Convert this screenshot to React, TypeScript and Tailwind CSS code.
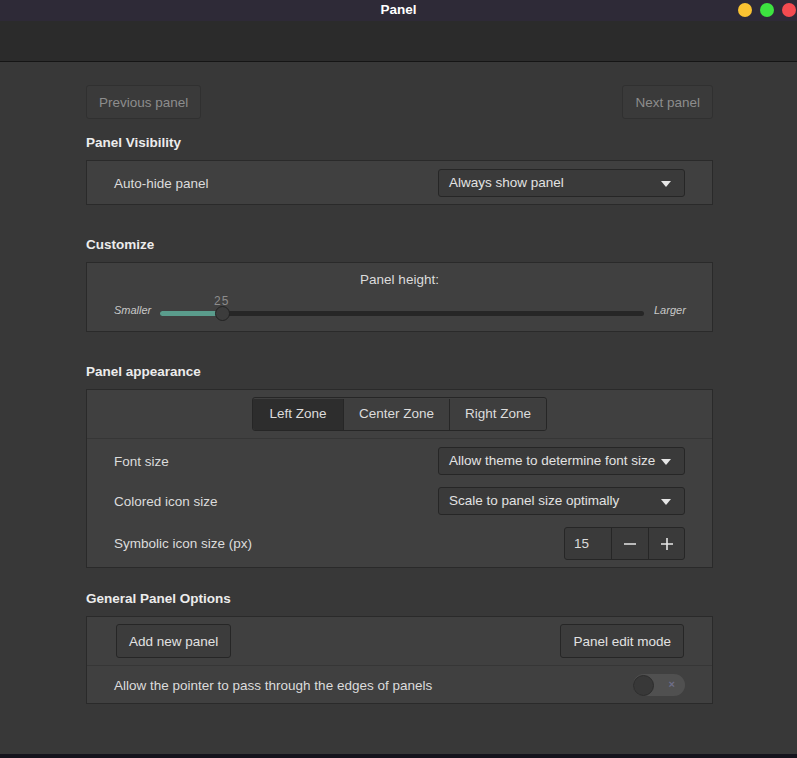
import React from 'react';

const font = { fontFamily: '"Liberation Sans", "Noto Sans", sans-serif' };

function Caret() {
  return (
    <svg width="10" height="6" viewBox="0 0 10 6" aria-hidden="true">
      <path d="M0 0h10L5 6z" fill="#e6e6e6" />
    </svg>
  );
}

function Dropdown({ label }: { label: string }) {
  return (
    <div className="flex h-[28px] w-[247px] items-center justify-between rounded-[3px] border border-[#262626] bg-[#3a3a3a] pl-[10px] pr-[13px] pt-[1px] text-[13.5px] text-[#e2e2e2]">
      <span>{label}</span>
      <Caret />
    </div>
  );
}

function Heading({ children, className }: { children: React.ReactNode; className: string }) {
  return <h2 className={`h-[18px] pt-[2px] text-[13.5px] font-bold leading-[16px] text-[#ececec] ${className}`}>{children}</h2>;
}

function Box({ children }: { children: React.ReactNode }) {
  return <div className="mt-[9px] border border-[#2a2a2a] bg-[#404040]">{children}</div>;
}

function Row({ label, children, className }: { label: string; children: React.ReactNode; className: string }) {
  return (
    <div className={`flex items-center justify-between pl-[27px] pr-[27px] ${className}`}>
      <span className="pt-[2px] text-[13.5px] text-[#dcdcdc]">{label}</span>
      {children}
    </div>
  );
}

export default function App() {
  return (
    <div className="flex h-[758px] w-[797px] flex-col overflow-hidden bg-[#383838]" style={font}>
      {/* title bar */}
      <div className="relative flex h-[21px] shrink-0 items-center justify-center bg-[#2e2a37]">
        <span className="text-[13.5px] font-bold text-white">Panel</span>
        <div className="absolute right-[1px] top-[3px] flex gap-[8px]">
          <span className="h-[14px] w-[14px] rounded-full bg-[#fbc332]" />
          <span className="h-[14px] w-[14px] rounded-full bg-[#3de340]" />
          <span className="h-[14px] w-[14px] rounded-full bg-[#f44b50]" />
        </div>
      </div>
      <div className="h-[41px] shrink-0 border-b border-[#151515] bg-[#2b2b2b]" />

      <div className="flex-1 pl-[86px] pr-[84px] pt-[23px]">
        <div className="flex justify-between">
          <button className="h-[34px] rounded-[3px] border border-[#303030] bg-[#3a3a3a] px-[12px] pt-[2px] text-[13.5px] text-[#8d8d8d]">
            Previous panel
          </button>
          <button className="h-[34px] rounded-[3px] border border-[#303030] bg-[#3a3a3a] px-[12px] pt-[2px] text-[13.5px] text-[#8d8d8d]">
            Next panel
          </button>
        </div>

        <Heading className="mt-[14px]">Panel Visibility</Heading>
        <Box>
          <Row label="Auto-hide panel" className="pb-[7px] pt-[8px]">
            <Dropdown label="Always show panel" />
          </Row>
        </Box>

        <Heading className="mt-[30px]">Customize</Heading>
        <Box>
          <div className="flex h-[68px] flex-col">
            <div className="pt-[8px] text-center text-[13.5px] leading-[18px] text-[#dcdcdc]">Panel height:</div>
            <div className="mt-[13px] flex items-center pl-[27px] pr-[26px]">
              <span className="mb-[7px] w-[46px] text-[11px] italic text-[#c8c8c8]">Smaller</span>
              <div className="relative h-[5px] flex-1 rounded-full bg-[#262626]">
                <div className="h-full w-[63px] rounded-full bg-[#5a9c8c]" />
                <div className="absolute left-[55px] top-[-5px] h-[15px] w-[15px] rounded-full border border-[#222] bg-[#3c3c3c]" />
                <span className="absolute left-[54px] top-[-17px] text-[12px] leading-[14px] tracking-[1px] text-[#8c8c8c]">25</span>
              </div>
              <span className="mb-[7px] w-[42px] pl-[10px] text-[11px] italic text-[#c8c8c8]">Larger</span>
            </div>
          </div>
        </Box>

        <Heading className="mt-[30px]">Panel appearance</Heading>
        <Box>
          <div className="flex justify-center border-b border-[#363636] pb-[7px] pt-[7px]">
            <div className="flex h-[34px] overflow-hidden rounded-[3px] border border-[#262626] pt-[1px] text-[13.5px] text-[#dcdcdc]">
              <span className="flex w-[90px] items-center justify-center bg-[#2d2d2d]">Left Zone</span>
              <span className="flex w-[106px] items-center justify-center border-l border-[#262626] bg-[#3e3e3e]">Center Zone</span>
              <span className="flex w-[97px] items-center justify-center border-l border-[#262626] bg-[#3e3e3e]">Right Zone</span>
            </div>
          </div>
          <Row label="Font size" className="pt-[8px]">
            <Dropdown label="Allow theme to determine font size" />
          </Row>
          <Row label="Colored icon size" className="pt-[12px]">
            <Dropdown label="Scale to panel size optimally" />
          </Row>
          <Row label="Symbolic icon size (px)" className="pb-[7px] pt-[12px]">
            <div className="flex h-[33px] w-[121px] overflow-hidden rounded-[3px] border border-[#262626] bg-[#3a3a3a] text-[13.5px] text-[#dcdcdc]">
              <span className="flex w-[46px] items-center pl-[9px] pt-[1px]">15</span>
              <span className="flex w-[37px] items-center justify-center border-l border-[#262626]">
                <svg width="14" height="14" viewBox="0 0 14 14"><path d="M1 7h12" stroke="#e6e6e6" strokeWidth="1.6" /></svg>
              </span>
              <span className="flex flex-1 items-center justify-center border-l border-[#262626]">
                <svg width="14" height="14" viewBox="0 0 14 14"><path d="M1 7h12M7 1v12" stroke="#e6e6e6" strokeWidth="1.6" /></svg>
              </span>
            </div>
          </Row>
        </Box>

        <Heading className="mt-[21px]">General Panel Options</Heading>
        <Box>
          <div className="flex justify-between border-b border-[#363636] pb-[7px] pl-[29px] pr-[28px] pt-[7px]">
            <button className="h-[34px] rounded-[3px] border border-[#262626] bg-[#3c3c3c] px-[12px] pt-[2px] text-[13.5px] text-[#e2e2e2]">
              Add new panel
            </button>
            <button className="h-[34px] rounded-[3px] border border-[#262626] bg-[#3c3c3c] px-[12px] pt-[2px] text-[13.5px] text-[#e2e2e2]">
              Panel edit mode
            </button>
          </div>
          <Row label="Allow the pointer to pass through the edges of panels" className="pb-[7px] pt-[8px]">
            <div className="relative flex h-[22px] w-[52px] items-center rounded-full bg-[#505050]">
              <span className="h-[21px] w-[21px] rounded-full border border-[#2c2c2c] bg-[#383838]" />
              <span className="absolute right-[10px] top-[3px] text-[11px] font-bold leading-[14px] text-[#6e6e88]">×</span>
            </div>
          </Row>
        </Box>
      </div>
      <div className="h-[4px] shrink-0 bg-[#15131c]" />
    </div>
  );
}
